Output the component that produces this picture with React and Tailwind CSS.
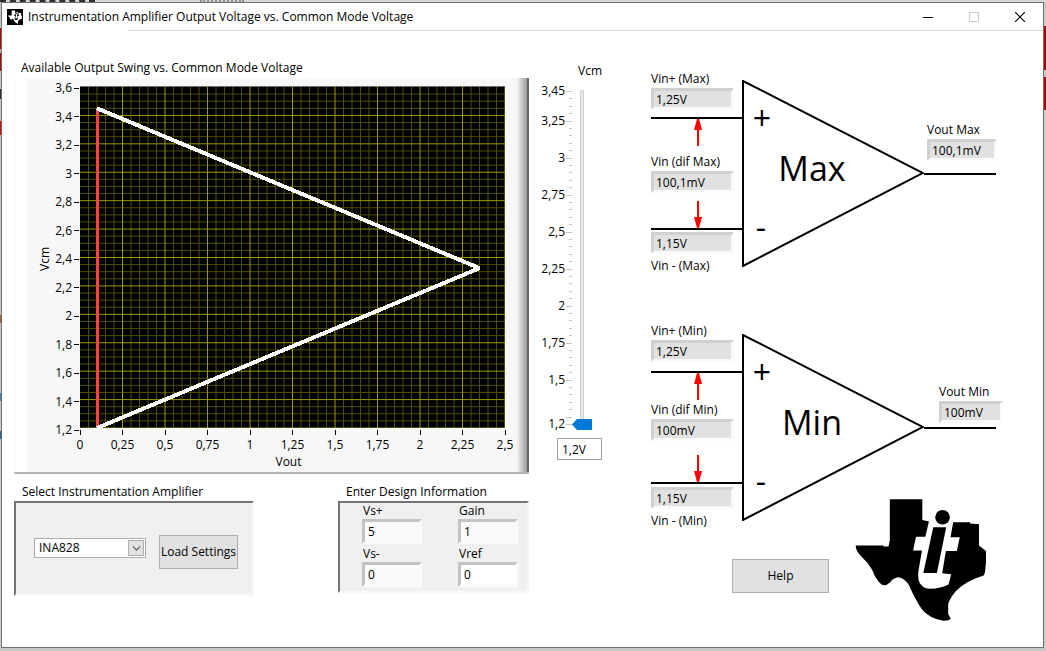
import React, { useState } from 'react';
import { ChevronDown } from 'lucide-react';

const X_TICKS = ['0', '0,25', '0,5', '0,75', '1', '1,25', '1,5', '1,75', '2', '2,25', '2,5'];
const Y_TICKS = ['3,6', '3,4', '3,2', '3', '2,8', '2,6', '2,4', '2,2', '2', '1,8', '1,6', '1,4', '1,2'];
const VCM_TICKS = [3.45, 3.25, 3, 2.75, 2.5, 2.25, 2, 1.75, 1.5, 1.2];
const VCM_MIN = 1.2;
const VCM_MAX = 3.45;

const formatNumber = (value) => String(value).replace('.', ',');

const TexasLogo = ({ className }) => (
    <svg viewBox="44 26 396 368" className={className} fill="currentColor" aria-hidden="true">
        <path d="M45 166H129V169H144L148 150V27H246V89L266 94L255 140H227L218 181H245L234 245Q232 270 238 279Q250 297 270 297Q302 296 325 284L333 253L306 250L317 183H350L359 141H331L339 96H390V100L417 102V166L438 183V218L435 248L431 257Q380 272 348 303Q323 333 324 348V373L332 387L325 392L310 393Q268 388 244 358Q225 330 205 285Q190 262 172 262Q158 265 148 278Q135 291 123 284Q104 267 95 240Q82 217 60 197Q45 181 45 166Z" />
        <path d="M279 111H318L290 249H249Z" />
        <circle cx="307" cy="81" r="22" />
    </svg>
);

const TitleBar = () => (
    <header className="flex h-[27px] items-center">
        <span className="ml-[5px] flex size-4 items-center justify-center bg-black text-white">
            <TexasLogo className="size-3.5" />
        </span>
        <h1 className="ml-[5px] flex-1 truncate">Instrumentation Amplifier Output Voltage vs. Common Mode Voltage</h1>
        <button aria-label="Minimize" className="flex h-full w-[46px] items-center justify-center">
            <svg viewBox="0 0 10 10" className="size-2.5" stroke="currentColor">
                <path d="M0 5.5H10" />
            </svg>
        </button>
        <button aria-label="Maximize" disabled className="flex h-full w-[46px] items-center justify-center text-[#c8c8c8]">
            <svg viewBox="0 0 10 10" className="size-2.5" fill="none" stroke="currentColor">
                <path d="M0.5 0.5H9.5V9.5H0.5Z" />
            </svg>
        </button>
        <button aria-label="Close" className="flex h-full w-[46px] items-center justify-center">
            <svg viewBox="0 0 10 10" className="size-2.5" stroke="currentColor" strokeWidth="1.2">
                <path d="M0 0L10 10M10 0L0 10" />
            </svg>
        </button>
    </header>
);

const PlotArea = () => {
    const px = (v) => v * 170;
    const py = (v) => (3.6 - v) * 142.5;
    const columns = Array.from({ length: 51 }, (_, i) => i);
    const rows = Array.from({ length: 49 }, (_, i) => i);

    return (
        <svg
            viewBox="0 0 425 342"
            preserveAspectRatio="none"
            shapeRendering="crispEdges"
            className="h-[342px] w-full border-t border-[#707070] bg-black"
            role="img"
            aria-label="Vcm against Vout"
        >
            <g stroke="#4e4e00">
                {columns.filter(i => i % 5).map(i => <line key={i} x1={px(i * 0.05)} x2={px(i * 0.05)} y1="0" y2="342" />)}
                {rows.filter(i => i % 4).map(i => <line key={i} x1="0" x2="425" y1={i * 7.125} y2={i * 7.125} />)}
            </g>
            <g stroke="#9a9a00">
                {columns.filter(i => i % 5 === 0 && i).map(i => <line key={i} x1={px(i * 0.05)} x2={px(i * 0.05)} y1="0" y2="342" />)}
                {rows.filter(i => i % 4 === 0 && i).map(i => <line key={i} x1="0" x2="425" y1={i * 7.125} y2={i * 7.125} />)}
            </g>
            <line x1={px(0.1)} x2={px(0.1)} y1={py(3.45)} y2={py(1.2)} stroke="#ff4040" strokeWidth="3" />
            <polyline
                points={`${px(0.1)},${py(3.45)} ${px(2.35)},${py(2.325)} ${px(0.1)},${py(1.2)}`}
                fill="none"
                stroke="#fff"
                strokeWidth="4"
                strokeLinejoin="bevel"
            />
        </svg>
    );
};

const SwingChart = () => (
    <section className="min-w-0 flex-1">
        <h2 className="ml-[7px]">Available Output Swing vs. Common Mode Voltage</h2>
        <div className="mt-[2px] flex border-b-2 border-l border-b-[#b4b4b4] border-l-[#f4f4f4] pl-[11px]">
            <div className="flex h-[394px] min-w-0 flex-1 bg-[#f7f7f7] pt-[3px]">
                <div className="flex h-[356px] w-[27px] items-center justify-end">
                    <span className="rotate-180 [writing-mode:vertical-rl]">Vcm</span>
                </div>
                <ul className="flex h-[356px] w-[26px] flex-col justify-between">
                    {Y_TICKS.map(tick => (
                        <li key={tick} className="flex h-[14px] items-center justify-end gap-[2px]">
                            {tick}
                            <span className="h-px w-[5px] shrink-0 bg-black" />
                        </li>
                    ))}
                </ul>
                <div className="ml-px mt-[5px] flex min-w-0 flex-1 flex-col pr-3">
                    <PlotArea />
                    <ul className="mt-[2px] flex justify-between">
                        {X_TICKS.map(tick => (
                            <li key={tick} className="flex w-0 flex-col items-center gap-[2px]">
                                <span className="h-[5px] w-px bg-black" />
                                <span>{tick}</span>
                            </li>
                        ))}
                    </ul>
                    <p className="mt-px pr-2 text-center">Vout</p>
                </div>
            </div>
            <div className="w-3 border-r-2 border-[#686868] bg-linear-to-r from-[#f4f4f4] to-[#9c9c9c]" />
        </div>
    </section>
);

const VcmSlider = () => {
    const [vcm, setVcm] = useState(VCM_MIN);
    const scaleTicks = Array.from({ length: 46 }, (_, i) => i);
    const isMajor = (i) => i === 0 || i === 45 || i % 5 === 4;

    return (
        <section className="w-[122px] shrink-0 pt-[3px]">
            <label htmlFor="vcm" className="block text-center">Vcm</label>
            <div className="mt-[11px] flex pl-[14px]">
                <ul className="mb-[6px] mt-px flex w-[22px] flex-col items-end">
                    {VCM_TICKS.map((tick, i) => (
                        <li
                            key={tick}
                            className="flex h-0 flex-col items-end"
                            style={{ flexGrow: i < VCM_TICKS.length - 1 ? (tick - VCM_TICKS[i + 1]) * 100 : 0 }}
                        >
                            <span className="-mt-2 h-4">{formatNumber(tick)}</span>
                        </li>
                    ))}
                </ul>
                <svg viewBox="0 0 6 336" className="ml-px h-[336px] w-[6px]" stroke="#c4c4c4" shapeRendering="crispEdges" aria-hidden="true">
                    {scaleTicks.map(i => (
                        <line key={i} x1={isMajor(i) ? 0 : 3} x2="6" y1={i * 7.4 + 1.5} y2={i * 7.4 + 1.5} />
                    ))}
                </svg>
                <input
                    id="vcm"
                    type="range"
                    min={VCM_MIN}
                    max={VCM_MAX}
                    step="0.05"
                    value={vcm}
                    onChange={(e) => setVcm(Number(e.target.value))}
                    className="h-[340px] w-5 appearance-none bg-[linear-gradient(90deg,#cdd1d1_1px,#e7eaea_1px,#e7eaea_3px,#cdd1d1_3px)] bg-[length:4px_100%] bg-center bg-no-repeat [direction:rtl] [writing-mode:vertical-lr] [&::-webkit-slider-thumb]:h-[11px] [&::-webkit-slider-thumb]:w-5 [&::-webkit-slider-thumb]:appearance-none [&::-webkit-slider-thumb]:bg-[#0078d7] [&::-webkit-slider-thumb]:[clip-path:polygon(0_50%,25%_0,100%_0,100%_100%,25%_100%)]"
                />
            </div>
            <input
                aria-label="Vcm value"
                readOnly
                value={`${formatNumber(vcm)}V`}
                className="ml-7 mt-2 block h-[22px] w-[45px] border border-[#a0a0a4] bg-white px-1"
            />
        </section>
    );
};

const Panel = ({ title, className, children }) => (
    <section>
        <h2 className="ml-2">{title}</h2>
        <div className={`mt-px border-2 border-b-[#f7f7f7] border-l-[#747474] border-r-[#f7f7f7] border-t-[#747474] bg-[#f0f0f0] ${className}`}>
            {children}
        </div>
    </section>
);

const AmplifierPicker = () => (
    <Panel title="Select Instrumentation Amplifier" className="flex h-[95px] w-[240px] items-start pl-[18px] pt-8">
        <div className="relative mt-[3px]">
            <select aria-label="Instrumentation amplifier" className="h-5 w-28 appearance-none border border-[#abadb3] bg-white pl-1">
                <option>INA828</option>
            </select>
            <span className="pointer-events-none absolute right-[2px] top-[2px] flex size-4 items-center justify-center border border-[#adadad] bg-[#e1e1e1] text-[#555]">
                <ChevronDown size={13} strokeWidth={2} className="shrink-0" />
            </span>
        </div>
        <button className="ml-[13px] h-[34px] w-[79px] whitespace-nowrap border border-[#adadad] bg-[#e1e1e1]">Load Settings</button>
    </Panel>
);

const DesignField = ({ id, label, initial, inputClass = 'bg-[#fafafa]' }) => (
    <div className="w-[60px]">
        <label htmlFor={id} className="block pl-px">{label}</label>
        <input
            id={id}
            defaultValue={initial}
            className={`block h-[25px] w-full border-[3px] border-b-[#fbfbfb] border-l-[#c3c3c3] border-r-[#fbfbfb] border-t-[#c3c3c3] px-[3px] ${inputClass}`}
        />
    </div>
);

const DesignInfo = () => (
    <Panel title="Enter Design Information" className="grid h-[92px] w-[191px] grid-cols-[96px_60px] content-start gap-y-[2px] pl-[22px]">
        <DesignField id="vs-plus" label="Vs+" initial="5" />
        <DesignField id="gain" label="Gain" initial="1" />
        <DesignField id="vs-minus" label="Vs-" initial="0" />
        <DesignField id="vref" label="Vref" initial="0" inputClass="bg-white" />
    </Panel>
);

const Readout = ({ id, label, value, labelBelow, className }) => (
    <div className={`flex ${labelBelow ? 'flex-col-reverse gap-1' : 'flex-col gap-px'} ${className}`}>
        <label htmlFor={id} className="whitespace-nowrap">{label}</label>
        <input
            id={id}
            readOnly
            value={value}
            className="h-[22px] w-full border-[3px] border-b-[#fafafa] border-l-[#d0d0d0] border-r-[#fafafa] border-t-[#d0d0d0] bg-[#e1e1e1] px-[2px]"
        />
    </div>
);

const Arrow = ({ down }) => (
    <svg viewBox="0 0 8 27" className={`ml-[43px] h-[27px] w-2 ${down ? 'rotate-180' : ''}`} fill="#f00" aria-hidden="true">
        <path d="M3 0H5L8 11H5V27H3V11H0Z" />
    </svg>
);

const Wire = () => <div className="h-[2px] w-full bg-black" />;

const Amplifier = ({ name, differential, output, topGap, bottomGap, triangleTop, middlePad, outTop, outGap, outWidth }) => (
    <section className="flex items-start">
        <div className="w-[91px] shrink-0">
            <Readout id={`vin-plus-${name}`} label={`Vin+ (${name})`} value="1,25V" className={`w-[83px] ${topGap}`} />
            <Wire />
            <div className="flex h-[109px] flex-col justify-between">
                <Arrow />
                <Readout id={`vin-dif-${name}`} label={`Vin (dif ${name})`} value={differential} className={`w-[83px] ${middlePad}`} />
                <Arrow down />
            </div>
            <Wire />
            <Readout id={`vin-minus-${name}`} label={`Vin - (${name})`} value="1,15V" labelBelow className={`w-[83px] ${bottomGap}`} />
        </div>
        <div className={`shrink-0 ${triangleTop}`}>
            <svg viewBox="0 0 182 187" className="h-[187px] w-[182px]">
                <path d="M1 1V186L181 93Z" fill="none" stroke="#000" strokeWidth="2" />
                <g className="font-['Open_Sans',sans-serif]" textAnchor="middle">
                    <text x="20" y="50" fontSize="32">+</text>
                    <text x="19" y="159" fontSize="32">-</text>
                    <text x="70" y="101" fontSize="34">{name}</text>
                </g>
            </svg>
        </div>
        <div className={`w-[72px] shrink-0 ${outTop}`}>
            <Readout id={`vout-${name}`} label={`Vout ${name}`} value={output} className={`${outWidth} ${outGap}`} />
            <Wire />
        </div>
    </section>
);

// Slivers of the browser page that stay visible beside the window
const BACKDROP = [
    [26, 'bg-[#c8c8c8]'],
    [21, 'bg-[#b00000]'],
    [4, 'bg-[#c8b0b0]'],
    [18, 'bg-[#b00000]'],
    [18, 'bg-[#c8c8c8]'],
    [10, 'bg-[#303030]'],
    [22, 'bg-[#c8c8c8]'],
    [14, 'bg-[#e00000]'],
    [180, 'bg-[#c8c8c8]'],
    [8, 'bg-[#a06020]'],
    [70, 'bg-[#c8c8c8]'],
    [8, 'bg-[#4080c8]'],
    [30, 'bg-[#c8c8c8]'],
    [8, 'bg-[#2060a0]'],
];

export default function App() {
    return (
        <div className="flex min-h-screen flex-col bg-[#cdcdcd] font-['Open_Sans',sans-serif] text-[12px] leading-4 text-black">
            <div className="flex h-[2px] items-end gap-[105px] overflow-hidden bg-[#d8d8d8]">
                <span className="h-[2px] w-[95px] border-t-2 border-dashed border-[#303030]" />
                <span className="h-[2px] w-11 border-t-2 border-dotted border-[#909090]" />
            </div>
            <div className="flex flex-1">
                <div className="w-px shrink-0">
                    {BACKDROP.map(([height, color], i) => (
                        <div key={i} className={color} style={{ height }} />
                    ))}
                </div>
                <div className="min-w-0 flex-1 border border-[#6f6f6f] bg-white">
                    <TitleBar />
                    <div className="ml-[126px] h-px bg-[#d6d6d6]" />
                    <main className="flex">
                        <div className="min-w-0 flex-1 pl-3 pt-[29px]">
                            <div className="flex">
                                <SwingChart />
                                <VcmSlider />
                            </div>
                            <div className="mr-[122px] mt-[10px] flex items-start justify-between">
                                <AmplifierPicker />
                                <DesignInfo />
                            </div>
                        </div>
                        <div className="w-[392px] shrink-0 pt-10">
                            <Amplifier
                                name="Max"
                                differential="100,1mV"
                                output="100,1mV"
                                topGap="pb-[7px]"
                                bottomGap="pt-[2px]"
                                middlePad="pb-0"
                                triangleTop="pt-[9px]"
                                outTop="pt-[51px]"
                                outGap="ml-[3px] pb-3"
                                outWidth="w-[70px]"
                            />
                            <div className="mt-[49px]">
                                <Amplifier
                                    name="Min"
                                    differential="100mV"
                                    output="100mV"
                                    topGap="pb-[9px]"
                                    bottomGap="pt-[3px]"
                                    middlePad="pb-3"
                                    triangleTop="pt-[11px]"
                                    outTop="pt-[61px]"
                                    outGap="ml-[15px] pb-1"
                                    outWidth="w-[64px]"
                                />
                            </div>
                            <div className="-mt-[30px] flex items-end gap-[26px] pl-[81px]">
                                <button className="mb-7 h-[34px] w-[97px] border border-[#adadad] bg-[#e1e1e1]">Help</button>
                                <TexasLogo className="h-[122px] w-[132px]" />
                            </div>
                        </div>
                    </main>
                </div>
                <div className="w-[2px] shrink-0">
                    <div className="h-6 bg-[#d0c8c8]" />
                    <div className="h-11 bg-[#a80000]" />
                    <div className="h-[7px] bg-[#c8c8c8]" />
                    <div className="h-[33px] bg-[#a80000]" />
                </div>
            </div>
            <div className="h-[3px] bg-[#c8c8c8]" />
        </div>
    );
}
